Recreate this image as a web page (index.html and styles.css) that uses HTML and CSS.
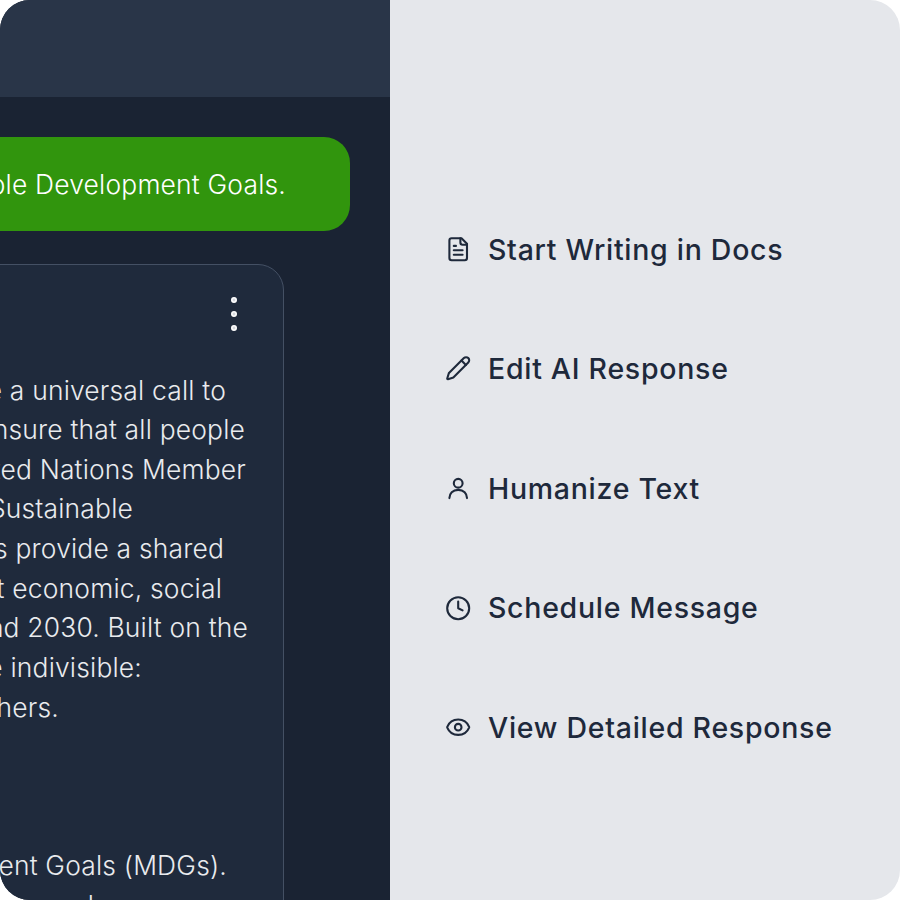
FILE: index.html
```html
<!DOCTYPE html>
<html lang="en">
<head>
  <meta charset="UTF-8">
  <title>AI Response Actions</title>
  <link rel="stylesheet" href="styles.css">
</head>
<body>
  <div class="frame">
    <div class="chat">
      <div class="chat_bar"></div>
      <div class="bubble"><span>Sustainable Development Goals.</span></div>
      <div class="card">
        <div class="card_head">
          <svg class="dots" viewBox="0 0 8 36"><circle cx="4" cy="4" r="2.2"/><circle cx="4" cy="18" r="2.2"/><circle cx="4" cy="32" r="2.2"/></svg>
        </div>
        <div class="line pad_a"><span>are a universal call to</span></div>
        <div class="line pad_b"><span>ensure that all people</span></div>
        <div class="line pad_c"><span>United Nations Member</span></div>
        <div class="line pad_d"><span>Sustainable</span></div>
        <div class="line pad_e"><span>Goals provide a shared</span></div>
        <div class="line pad_f"><span>about economic, social</span></div>
        <div class="line"><span>and 2030. Built on the</span></div>
        <div class="line pad_g"><span>are indivisible:</span></div>
        <div class="line pad_h"><span>others.</span></div>
        <div class="line"></div>
        <div class="line"></div>
        <div class="line"></div>
        <div class="line pad_i"><span>Development Goals (MDGs).</span></div>
        <div class="line pad_j"><span>and</span></div>
      </div>
    </div>

    <div class="actions">
      <div class="action">
        <svg class="icon" viewBox="0 0 24 24"><path d="M15 2H6a2 2 0 0 0-2 2v16a2 2 0 0 0 2 2h12a2 2 0 0 0 2-2V7Z"/><path d="M14 2v4a2 2 0 0 0 2 2h4"/><path d="M10 9H8"/><path d="M16 13H8"/><path d="M16 17H8"/></svg>
        <span>Start Writing in Docs</span>
      </div>
      <div class="action">
        <svg class="icon" viewBox="0 0 24 24"><path d="M21.174 6.812a1 1 0 0 0-3.986-3.987L3.842 16.174a2 2 0 0 0-.5.83l-1.321 4.352a.5.5 0 0 0 .623.622l4.353-1.32a2 2 0 0 0 .83-.497z"/><path d="m15 5 4 4"/></svg>
        <span>Edit AI Response</span>
      </div>
      <div class="action">
        <svg class="icon" viewBox="0 0 24 24"><circle cx="12" cy="7.5" r="4"/><path d="M4 21c0-4 3-7.5 8-7.5s8 3.5 8 7.5"/></svg>
        <span>Humanize Text</span>
      </div>
      <div class="action">
        <svg class="icon" viewBox="0 0 24 24"><circle cx="12" cy="12" r="10"/><path d="M12 6v6l4 2"/></svg>
        <span>Schedule Message</span>
      </div>
      <div class="action">
        <svg class="icon" viewBox="0 0 24 24"><path d="M2.062 12.348a1 1 0 0 1 0-.696 10.75 10.75 0 0 1 19.876 0 1 1 0 0 1 0 .696 10.75 10.75 0 0 1-19.876 0"/><circle cx="12" cy="12" r="3"/></svg>
        <span>View Detailed Response</span>
      </div>
    </div>
  </div>
</body>
</html>
```

FILE: styles.css
```css
body {
  margin: 0;
  background-color: #fff;
}
.frame {
  display: flex;
  width: 900px;
  height: 900px;
  border-radius: 30px;
  overflow: hidden;
  font-family: "Inter", "Liberation Sans", sans-serif;
}
.chat {
  width: 390px;
  flex-shrink: 0;
  overflow: hidden;
  background-color: #1a2333;
}
.chat_bar {
  height: 97px;
  background-color: #293548;
}
.bubble {
  display: flex;
  justify-content: flex-end;
  align-items: center;
  width: 350px;
  height: 94px;
  margin-top: 40px;
  padding-right: 64px;
  box-sizing: border-box;
  border-radius: 0 26px 26px 0;
  font-size: 26.4px;
  font-weight: 350;
  letter-spacing: 0.2px;
  white-space: nowrap;
  color: #fff;
  background-color: #31950d;
}
.card {
  width: 314px;
  height: 700px;
  margin: 33px 0 0 -30px;
  padding: 31px 35px 0 0;
  box-sizing: border-box;
  border: 1px solid #445064;
  border-radius: 26px;
  background-color: #1f2a3c;
}
.card_head {
  display: flex;
  justify-content: flex-end;
  height: 74.5px;
}
.dots {
  width: 8px;
  height: 36px;
  margin-right: 10.5px;
  fill: #d5d8de;
  stroke: #fff;
  stroke-width: 1.6;
}
.line {
  display: flex;
  justify-content: flex-end;
  height: 39.67px;
  line-height: 39.67px;
  font-size: 26.4px;
  font-weight: 350;
  letter-spacing: 0.2px;
  white-space: nowrap;
  color: #e9ebee;
}
.pad_a { padding-right: 22px; }
.pad_b { padding-right: 3px; }
.pad_c { padding-right: 2px; }
.pad_d { padding-right: 115px; }
.pad_e { padding-right: 24px; }
.pad_f { padding-right: 26px; }
.pad_g { padding-right: 106px; }
.pad_h { padding-right: 189px; }
.pad_i { padding-right: 21px; }
.pad_j { padding-right: 154px; }
.actions {
  flex: 1;
  display: flex;
  flex-direction: column;
  gap: 79.6px;
  padding: 229px 0 0 55px;
  background-color: #e5e7eb;
}
.action {
  display: flex;
  align-items: center;
  gap: 16.6px;
  height: 40px;
  font-size: 28.5px;
  font-weight: 450;
  letter-spacing: 0.72px;
  white-space: nowrap;
  color: #1e293b;
}
.icon {
  width: 26.4px;
  height: 26.4px;
  flex-shrink: 0;
  fill: none;
  stroke: #1e293b;
  stroke-width: 1.9;
  stroke-linecap: round;
  stroke-linejoin: round;
}
```
